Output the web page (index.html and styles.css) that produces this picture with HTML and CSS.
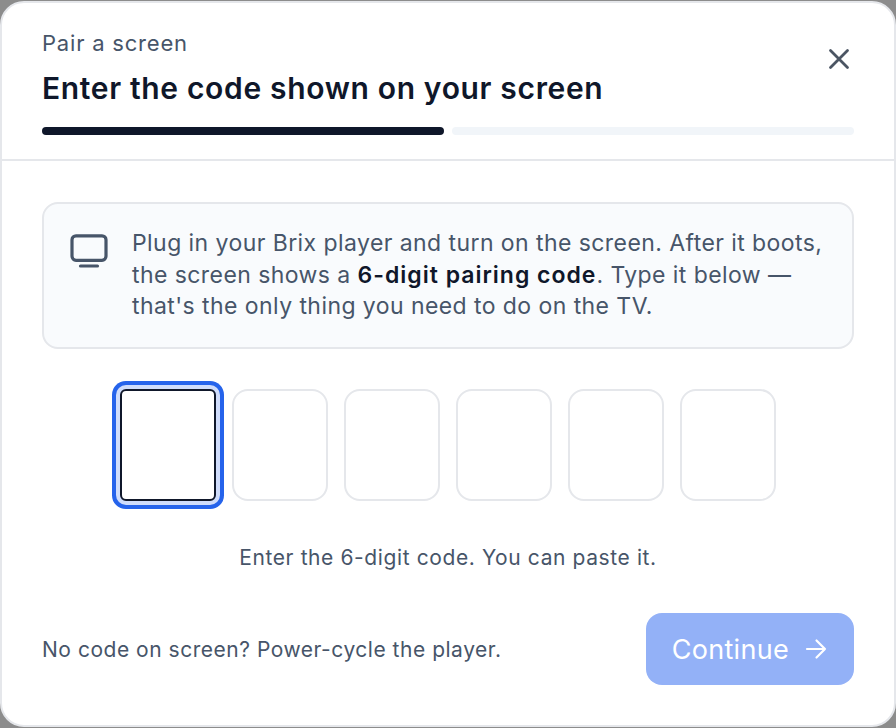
FILE: index.html
```html
<!DOCTYPE html>
<html lang="en">
<head>
  <meta charset="UTF-8">
  <title>Pair a screen</title>
  <link rel="stylesheet" href="styles.css">
</head>
<body>
  <div class="modal">
    <div class="modal-header">
      <div class="header-row">
        <div>
          <div class="eyebrow">Pair a screen</div>
          <h1>Enter the code shown on your screen</h1>
        </div>
        <button class="close" aria-label="Close">
          <svg width="24" height="24" viewBox="0 0 24 24" fill="none" stroke="#4b5563" stroke-width="2.8" stroke-linecap="round"><path d="M3.500 3.500l17 17M20.500 3.500l-17 17"/></svg>
        </button>
      </div>
      <div class="steps">
        <span class="step active"></span>
        <span class="step"></span>
      </div>
    </div>

    <div class="modal-body">
      <div class="info">
        <svg class="info-icon" width="38" height="38" viewBox="0 0 38 38" fill="none" stroke="#475569" stroke-linecap="round" stroke-linejoin="round" stroke-width="3.200"><rect x="2" y="1.800" width="34" height="24.500" rx="4"/><path d="M10.500 32h17"/></svg>
        <p>Plug in your Brix player and turn on the screen. After it boots,<br>the screen shows a <strong>6-digit pairing code</strong>. Type it below —<br>that's the only thing you need to do on the TV.</p>
      </div>

      <div class="code-row">
        <input class="digit focused" type="text" maxlength="1">
        <input class="digit" type="text" maxlength="1">
        <input class="digit" type="text" maxlength="1">
        <input class="digit" type="text" maxlength="1">
        <input class="digit" type="text" maxlength="1">
        <input class="digit" type="text" maxlength="1">
      </div>

      <p class="hint">Enter the 6-digit code. You can paste it.</p>

      <div class="footer">
        <span class="help">No code on screen? Power-cycle the player.</span>
        <button class="continue" disabled>Continue
          <svg width="24" height="24" viewBox="0 0 24 24" fill="none" stroke="#fff" stroke-width="2.200" stroke-linecap="round" stroke-linejoin="round"><path d="M3 12h18M12.500 3.500l8.500 8.500-8.500 8.500"/></svg>
        </button>
      </div>
    </div>
  </div>
</body>
</html>
```

FILE: styles.css
```css
* {
  box-sizing: border-box;
}
body {
  margin: 0;
  height: 728px;
  padding: 1px 0;
  background: #8c8c8c;
  font-family: Inter, sans-serif;
  overflow: hidden;
}
.modal {
  height: 726px;
  background: #fff;
  border: 2px solid #e5e7eb;
  border-radius: 24px;
}
/* Header */
.modal-header {
  height: 158px;
  padding: 25px 40px 0;
  border-bottom: 2px solid #e5e7eb;
}
.header-row {
  display: flex;
  justify-content: space-between;
  align-items: flex-start;
}
.eyebrow {
  font-size: 22px;
  line-height: 30px;
  letter-spacing: 0.8px;
  color: #475569;
}
h1 {
  margin: 12px 0 0;
  font-size: 30px;
  line-height: 36px;
  letter-spacing: 0.66px;
  font-weight: 600;
  color: #0f172a;
}
.close {
  display: flex;
  padding: 0;
  margin: 19px 3px 0 0;
  border: none;
  background: none;
}
.steps {
  display: flex;
  gap: 8px;
  margin-top: 21px;
}
.step {
  flex: 1;
  height: 8px;
  border-radius: 4px;
  background: #f1f5f9;
}
.step.active {
  background: #0f172a;
}
/* Body */
.modal-body {
  padding: 41px 40px 0;
}
.info {
  display: flex;
  gap: 24px;
  height: 147px;
  padding: 24px 26px;
  background: #f9fbfd;
  border: 2px solid #e5e7eb;
  border-radius: 16px;
}
.info-icon {
  flex: none;
  margin-top: 6px;
}
.info p {
  margin: 0;
  font-size: 23px;
  line-height: 31.700px;
  letter-spacing: 0.43px;
  white-space: nowrap;
  color: #475569;
}
.info strong {
  font-weight: 600;
  letter-spacing: 1px;
  color: #0f172a;
}
.code-row {
  display: flex;
  justify-content: center;
  gap: 16px;
  margin-top: 40px;
}
.digit {
  width: 96px;
  height: 112px;
  border: 2px solid #e5e7eb;
  border-radius: 16px;
  background: #fff;
}
.digit.focused {
  border-color: #0f172a;
  border-radius: 6px;
  outline: none;
  box-shadow: 0 0 0 4px #cfdcfb, 0 0 0 8px #2563eb;
}
.hint {
  margin: 42px 0 0;
  font-size: 21px;
  line-height: 30px;
  letter-spacing: 0.6px;
  text-align: center;
  color: #475569;
}
.footer {
  display: flex;
  justify-content: space-between;
  align-items: center;
  margin-top: 40px;
}
.help {
  font-size: 21px;
  letter-spacing: 0.52px;
  color: #475569;
}
.continue {
  display: flex;
  align-items: center;
  gap: 15px;
  height: 72px;
  padding: 0 26px;
  border: none;
  border-radius: 16px;
  background: #93b1f7;
  color: #fff;
  font-family: Inter, sans-serif;
  font-size: 27px;
  letter-spacing: 0.3px;
  font-weight: 400;
}
```
